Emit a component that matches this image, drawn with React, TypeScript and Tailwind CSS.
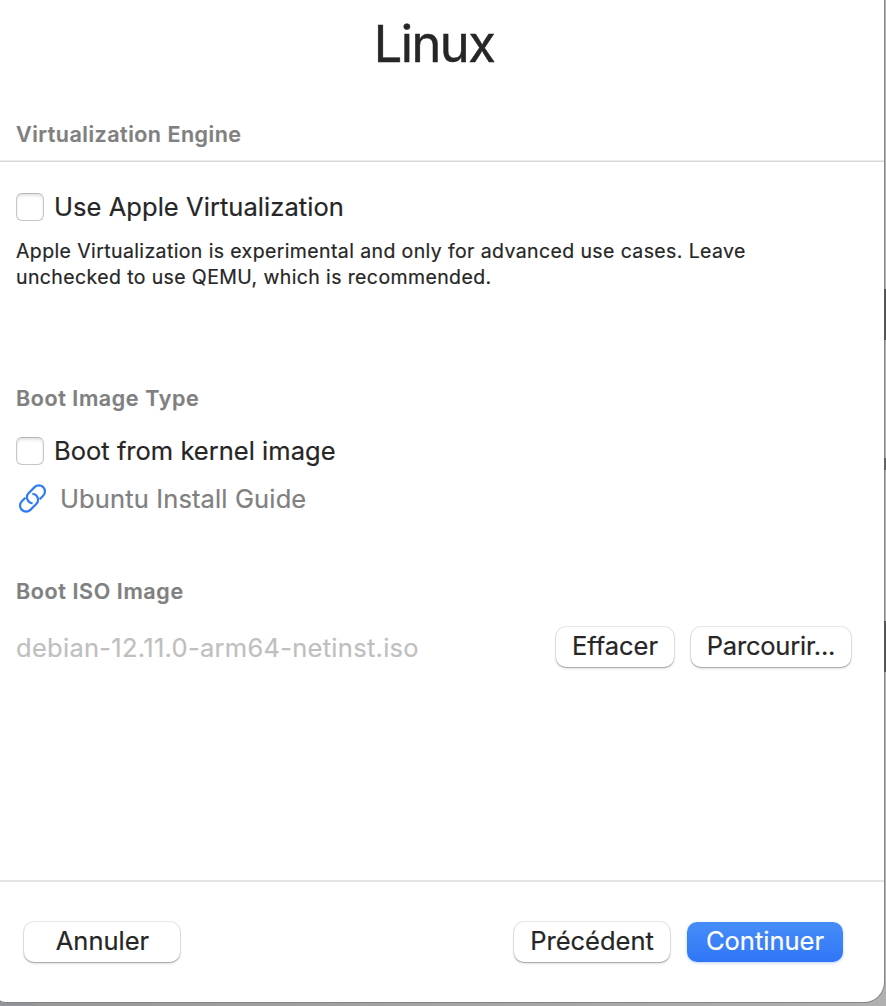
import type { ReactNode } from "react";

function Checkbox({ label, spacing }: { label: string; spacing: string }) {
  return (
    <label className="flex h-8 items-center">
      <span className="h-7 w-7 shrink-0 rounded-[6px] border border-[#c6c6c6] border-t-[#b6b6b6] bg-white shadow-[inset_0_2px_3px_rgba(0,0,0,0.11)]" />
      <span className={`ml-[10px] whitespace-nowrap text-[25.5px] leading-8 ${spacing}`}>{label}</span>
    </label>
  );
}

function SectionTitle({ children, spacing }: { children: ReactNode; spacing: string }) {
  return (
    <h2 className={`h-7 whitespace-nowrap text-[21.5px] font-semibold leading-7 text-[#808080] ${spacing}`}>
      {children}
    </h2>
  );
}

function Button({ children, className }: { children: ReactNode; className: string }) {
  return (
    <button
      className={`flex h-10 items-center justify-center whitespace-nowrap rounded-[10px] pb-[2px] text-[25.5px] leading-8 ${className}`}
    >
      {children}
    </button>
  );
}

const plain = "bg-white shadow-[0_0_0_1px_rgba(0,0,0,0.09),0_1px_1px_rgba(0,0,0,0.2),0_2px_3px_rgba(0,0,0,0.1)]";

export default function App() {
  return (
    <div className="h-[1006px] w-[886px] overflow-hidden bg-[linear-gradient(to_right,#929499_36px,#989898_36px,#b0b0b0)] font-['Inter','Liberation_Sans',sans-serif] text-[#262626] [-webkit-text-stroke:0.2px]">
      <div className="flex">
        <main className="flex h-[1002px] w-[884px] flex-col rounded-br-[20px] [border-bottom-left-radius:8px_2px] bg-white shadow-[0_0_0_1px_#858585]">
          <h1 className="mt-3 h-16 pr-[16px] text-center text-[50.5px] leading-[64px] tracking-[-1.5px] [-webkit-text-stroke:0.5px]">Linux</h1>
          <div className="mt-11 px-4">
            <SectionTitle spacing="tracking-[0.5px]">Virtualization Engine</SectionTitle>
          </div>
          <hr className="mt-3 h-[2px] border-0 bg-[linear-gradient(to_bottom,#ebebeb_50%,#d9d9d9_50%)]" />
          <div className="mt-[29px] px-4">
            <Checkbox label="Use Apple Virtualization" spacing="tracking-[0.05px]" />
            <p className="mt-[15px] whitespace-nowrap text-[19.5px] leading-[26px] tracking-[0.385px]">
              Apple Virtualization is experimental and only for advanced use cases. Leave
              <br />
              unchecked to use QEMU, which is recommended.
            </p>
            <div className="mt-[94px]">
              <SectionTitle spacing="tracking-[0.6px]">Boot Image Type</SectionTitle>
            </div>
            <div className="mt-[23px]">
              <Checkbox label="Boot from kernel image" spacing="tracking-[0.02px]" />
            </div>
            <a className="mt-4 flex h-8 items-center text-[#808080]">
              <svg
                className="-mt-px ml-[1px] h-[31px] w-[31px] shrink-0 text-[#2f7bf6]"
                viewBox="0 0 24 24"
                fill="none"
                stroke="currentColor"
                strokeWidth="1.7"
              >
                <path d="M11.9 8.3a4.7 4.7 0 0 1 3 8l-4.5 4.5a4.7 4.7 0 0 1-6.65-6.65l2.7-2.7M12.1 15.7a4.7 4.7 0 0 1-3-8l4.5-4.5a4.7 4.7 0 0 1 6.65 6.65l-2.7 2.7" />
              </svg>
              <span className="ml-3 whitespace-nowrap text-[25.5px] leading-8 tracking-[0.13px]">Ubuntu Install Guide</span>
            </a>
            <div className="mt-[62px]">
              <SectionTitle spacing="tracking-[0.62px]">Boot ISO Image</SectionTitle>
            </div>
            <div className="mt-[22px] flex h-10 items-center pr-[17px]">
              <span className="mt-[2px] flex-1 whitespace-nowrap text-[25.5px] leading-8 tracking-[0.28px] text-[#bfbfbf]">
                debian-12.11.0-arm64-netinst.iso
              </span>
              <Button className={`w-[118px] ${plain}`}>Effacer</Button>
              <Button className={`ml-[17px] w-40 tracking-[-0.2px] ${plain}`}>Parcourir...</Button>
            </div>
          </div>
          <footer className="mt-auto flex h-[122px] items-start border-t-2 border-[#e5e5e5] pl-6 pr-[41px] pt-10">
            <Button className={`mr-auto w-[156px] pl-px ${plain}`}>Annuler</Button>
            <Button className={`w-[156px] ${plain}`}>Précédent</Button>
            <Button className="ml-[17px] w-[156px] bg-linear-to-b from-[#478df8] to-[#3076f7] text-white shadow-[0_1px_3px_rgba(48,118,247,0.35)]">
              Continuer
            </Button>
          </footer>
        </main>
        <div className="flex h-[982px] w-[2px] flex-col bg-[linear-gradient(to_right,#858585_50%,#b4b4b4_50%)]">
          <span className="mt-[289px] h-[51px] bg-[#555555]" />
          <span className="mt-[118px] h-3 bg-[#626262]" />
          <span className="mt-[151px] h-[51px] bg-[#555555]" />
        </div>
      </div>
    </div>
  );
}
